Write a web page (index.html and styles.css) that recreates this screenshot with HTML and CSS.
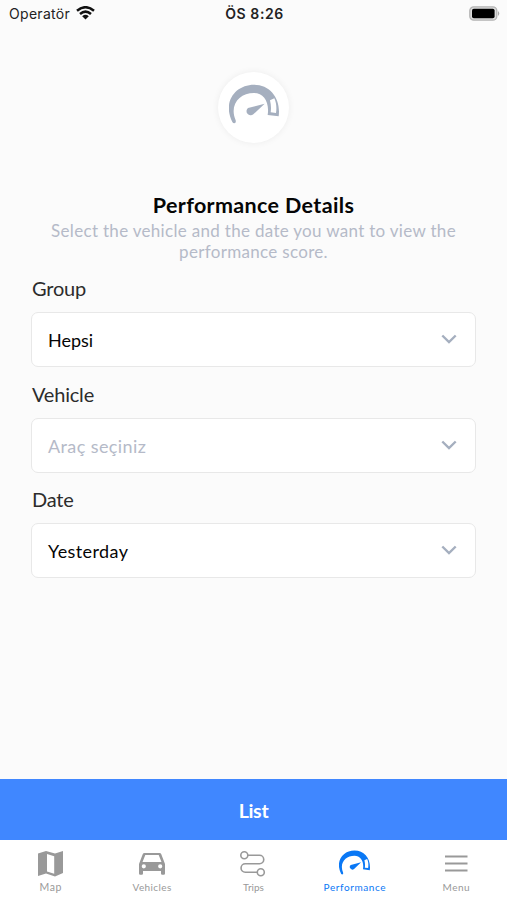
FILE: index.html
```html
<!DOCTYPE html>
<html lang="en">
<head>
<meta charset="utf-8">
<meta name="viewport" content="width=device-width, initial-scale=1">
<title>Performance Details</title>
<link rel="stylesheet" href="styles.css">
</head>
<body>
<svg class="defs" aria-hidden="true">
  <symbol id="gauge" viewBox="0 0 150 120">
    <path fill-rule="evenodd" d="M10 114C-20 55 18 2 75 2C125 2 156 45 149 97L116 93C122 55 105 27 75 27C32 27 0 62 20 109Q22 117 16 118Q12 118 10 114ZM123 49L136 43C143 58 143 74 141 87L125 85C127 72 126 62 123 49Z"/>
    <path d="M107 59L73 91A11.5 11.5 0 1 1 57 72Z"/>
  </symbol>
  <symbol id="chevron" viewBox="0 0 16 10"><path d="M1.3 1.5L8 8L14.7 1.5" fill="none" stroke="#a5afbf" stroke-width="2.4"/></symbol>
</svg>
<div class="screen">
  <header class="status">
    <div class="carrier"><span>Operatör</span>
      <svg class="wifi" viewBox="0 0 19 14"><path d="M1 4.8Q9.5-2.4 18 4.8M4 8Q9.5 3.2 15 8" fill="none" stroke="#111" stroke-width="2.5"/><path d="M6.2 10.2Q9.5 7.4 12.8 10.2L9.5 13.6Z" fill="#111"/></svg>
    </div>
    <time>ÖS 8:26</time>
    <svg class="battery" viewBox="0 0 31 15"><rect x=".8" y=".8" width="27" height="13.4" rx="4" fill="#ddd" stroke="#b4b4b4" stroke-width="1.3"/><rect x="3" y="2.8" width="22.6" height="9.4" rx="1.8"/><path d="M29 5Q31.5 7.5 29 10Z" fill="#aaa"/></svg>
  </header>
  <main>
    <div class="badge"><svg><use href="#gauge"/></svg></div>
    <h1>Performance Details</h1>
    <p class="intro">Select the vehicle and the date you want to view the<br>performance score.</p>
    <form>
      <label class="group">Group</label>
      <div class="select"><span class="hepsi">Hepsi</span><svg><use href="#chevron"/></svg></div>
      <label class="vehicle">Vehicle</label>
      <div class="select"><span class="placeholder">Araç seçiniz</span><svg><use href="#chevron"/></svg></div>
      <label class="date">Date</label>
      <div class="select"><span class="yesterday">Yesterday</span><svg><use href="#chevron"/></svg></div>
    </form>
  </main>
  <button class="list">List</button>
  <nav>
    <a><svg viewBox="0 0 28 28"><path fill-rule="evenodd" d="M1 3.5L9 1L18 3.5L26 1V23L18 26.5L9 23.5L1 26ZM10 4V21.5L17.2 23.7V6.2Z"/></svg><span class="t-map">Map</span></a>
    <a><svg viewBox="0 0 28 28"><path fill-rule="evenodd" d="M6.5 3H21.5Q22.8 3 23.3 4.3L27 14V23.5Q27 24.7 25.8 24.7H24.2Q23 24.7 23 23.5V21H5V23.5Q5 24.7 3.8 24.7H2.2Q1 24.7 1 23.5V14L4.7 4.3Q5.2 3 6.5 3ZM7.3 5L4.5 12H23.5L20.7 5ZM5.8 14.2A2.1 2.1 0 1 0 5.8 18.4A2.1 2.1 0 1 0 5.8 14.2ZM22.2 14.2A2.1 2.1 0 1 0 22.2 18.4A2.1 2.1 0 1 0 22.2 14.2Z"/></svg><span class="t-vehicles">Vehicles</span></a>
    <a><svg viewBox="0 0 28 28"><g fill="none" stroke="currentColor" stroke-width="1.6"><circle cx="5.3" cy="5.3" r="3.5"/><circle cx="21.8" cy="22.3" r="3.5"/><path d="M8.8 5.3H20.5A4.2 4.2 0 0 1 20.5 13.8H6.3A4.2 4.2 0 0 0 6.3 22.3H18.3"/></g></svg><span class="t-trips">Trips</span></a>
    <a class="active"><svg class="gauge"><use href="#gauge"/></svg><span class="t-performance">Performance</span></a>
    <a><svg viewBox="0 0 28 28"><path d="M3 6.5H25.5M3 13.5H25.5M3 20.5H25.5" fill="none" stroke="currentColor" stroke-width="2"/></svg><span class="t-menu">Menu</span></a>
  </nav>
</div>
</body>
</html>
```

FILE: styles.css
```css
* { box-sizing: border-box; }
body { margin: 0; background: #fbfbfb; font-family: Lato, "Liberation Sans", sans-serif; color: #050505; }
.defs { position: absolute; width: 0; height: 0; }
.screen { height: 900px; display: flex; flex-direction: column; }
.status { height: 28px; padding: 0 7px 2px 9px; display: grid; grid-template-columns: 1fr auto 1fr; align-items: center; font-family: Inter, sans-serif; font-size: 14px; color: #222; }
.carrier { display: flex; align-items: center; gap: 6px; letter-spacing: .3px; }
.wifi { width: 19px; height: 14px; }
time { font-weight: 600; letter-spacing: .6px; }
.battery { width: 31px; height: 15px; justify-self: end; }
main { flex: 1; padding: 44px 31px 0; display: flex; flex-direction: column; }
.badge { align-self: center; width: 71px; height: 71px; border-radius: 50%; background: #fff; box-shadow: 0 0 7px #00000010; display: flex; justify-content: center; padding-top: 12px; }
.badge svg { width: 50px; height: 40px; fill: #a5afbf; }
h1 { margin: 47px 0 0; height: 30px; line-height: 30px; text-align: center; font-size: 21.5px; font-weight: 700; white-space: nowrap; letter-spacing: .35px; }
.intro { margin: 0; text-align: center; font-size: 17px; line-height: 21px; color: #b5bac8; white-space: nowrap; letter-spacing: .31px; }
form { display: flex; flex-direction: column; margin-top: 8px; }
label { height: 36px; line-height: 36px; font-size: 20px; color: #2c2c2c; margin: 0 0 6px 1px; }
.group, .vehicle, .date { letter-spacing: -.2px; }
.select { height: 55px; margin-bottom: 8.5px; border: 1.5px solid #e8e8e8; border-radius: 7px; background: #fff; display: flex; align-items: center; justify-content: space-between; padding: 1px 18px 0 16px; font-size: 18px; }
.select svg { width: 16px; height: 10px; margin-top: -2px; }
.placeholder { color: #b5bac8; letter-spacing: .4px; }
.yesterday { letter-spacing: .4px; }
.list { height: 61px; border: 0; background: #4087ff; color: #fff; font: 700 19.5px/61px Lato, sans-serif; letter-spacing: -.3px; padding: 1px 0 0; }
nav { height: 60px; background: #fff; display: grid; grid-template-columns: repeat(5, 1fr); }
nav a { display: flex; flex-direction: column; align-items: center; color: #999; font-size: 10px; padding-top: 10px; }
nav svg { width: 28px; height: 28px; fill: currentColor; }
nav .gauge { width: 31px; height: 25px; margin-bottom: 3px; }
nav span { line-height: 14px; margin-top: 2px; }
.t-map { font-size: 10.5px; letter-spacing: .5px; }
.t-vehicles { letter-spacing: .4px; }
.t-menu { letter-spacing: .5px; }
nav .active { color: #0a78f5; }
.t-performance { letter-spacing: .6px; }
```
